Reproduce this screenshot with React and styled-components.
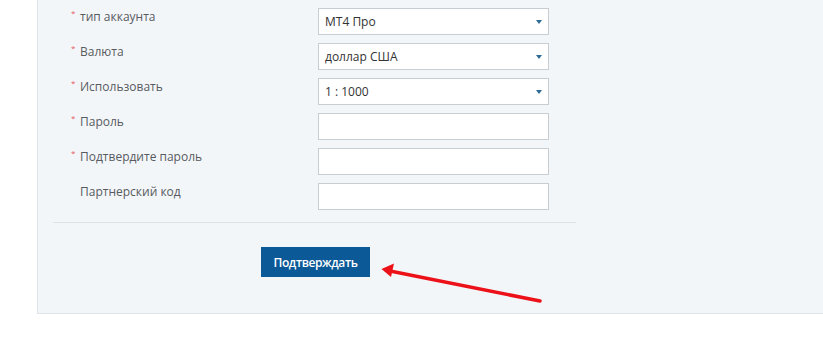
import React from "react";
import styled, { createGlobalStyle } from "styled-components";

const Global = createGlobalStyle`
  html, body { margin: 0; padding: 0; background: #fff; overflow: hidden; }
  body { font-family: "Open Sans", "Noto Sans", sans-serif; }
`;

const Page = styled.div`
  position: relative;
  width: 823px;
  height: 338px;
  overflow: hidden;
`;

const Panel = styled.div`
  margin-left: 37px;
  width: 900px;
  box-sizing: border-box;
  background: #f3f6f9;
  border-left: 1px solid #dfe4e9;
  border-bottom: 1px solid #dfe4e9;
  padding: 8px 0 36px 15px;
`;

const Form = styled.div`
  width: 523px;
`;

const Rows = styled.div`
  display: flex;
  flex-direction: column;
  gap: 8px;
  padding-left: 17px;
`;

const Row = styled.div`
  display: grid;
  grid-template-columns: 248px 231px;
  align-items: start;
`;

const Label = styled.div`
  display: flex;
  align-items: flex-start;
  font-size: 12px;
  line-height: 18px;
  color: #575b5f;
  padding-left: ${(p) => (p.$required ? 0 : 10)}px;
`;

const Star = styled.span`
  color: #e8575c;
  font-size: 8px;
  line-height: 8px;
  width: 10px;
  padding-left: 1px;
  box-sizing: border-box;
  margin-top: 1px;
`;

const Field = styled.div`
  position: relative;
  box-sizing: border-box;
  height: 27px;
  background: #fff;
  border: 1px solid #c8cdd2;
  display: flex;
  align-items: center;
  padding: 0 6px;
  font-size: 12px;
  color: #333;
`;

const Caret = styled.span`
  position: absolute;
  right: 6px;
  top: 11px;
  width: 0;
  height: 0;
  border-left: 3px solid transparent;
  border-right: 3px solid transparent;
  border-top: 4px solid #2d6a92;
`;

const Separator = styled.div`
  margin-top: 12px;
  border-top: 1px solid #dde2e7;
`;

const Actions = styled.div`
  display: flex;
  justify-content: center;
  padding-top: 24px;
  padding-left: 2px;
`;

const Button = styled.button`
  width: 109px;
  height: 30px;
  border: none;
  background: #0b5996;
  color: #fff;
  font-family: "Open Sans", sans-serif;
  font-weight: 600;
  font-size: 12px;
  letter-spacing: -0.4px;
  padding: 0;
  cursor: pointer;
`;

const Arrow = styled.svg`
  position: absolute;
  left: 370px;
  top: 255px;
`;

const rows = [
  { label: "тип аккаунта", req: true, value: "MT4 Про", select: true },
  { label: "Валюта", req: true, value: "доллар США", select: true },
  { label: "Использовать", req: true, value: "1 : 1000", select: true },
  { label: "Пароль", req: true },
  { label: "Подтвердите пароль", req: true },
  { label: "Партнерский код", req: false },
];

export default function App() {
  return (
    <Page>
      <Global />
      <Panel>
        <Form>
          <Rows>
            {rows.map((r) => (
              <Row key={r.label}>
                <Label $required={r.req}>
                  {r.req && <Star>*</Star>}
                  {r.label}
                </Label>
                <Field>
                  {r.value}
                  {r.select && <Caret />}
                </Field>
              </Row>
            ))}
          </Rows>
          <Separator />
          <Actions>
            <Button>Подтверждать</Button>
          </Actions>
        </Form>
      </Panel>
      <Arrow width="180" height="55" viewBox="0 0 180 55">
        <line x1="170" y1="46" x2="20" y2="16" stroke="#ec1118" strokeWidth="3.5" strokeLinecap="round" />
        <polygon points="11.5,14 24,8.5 21,22" fill="#ec1118" />
      </Arrow>
    </Page>
  );
}
